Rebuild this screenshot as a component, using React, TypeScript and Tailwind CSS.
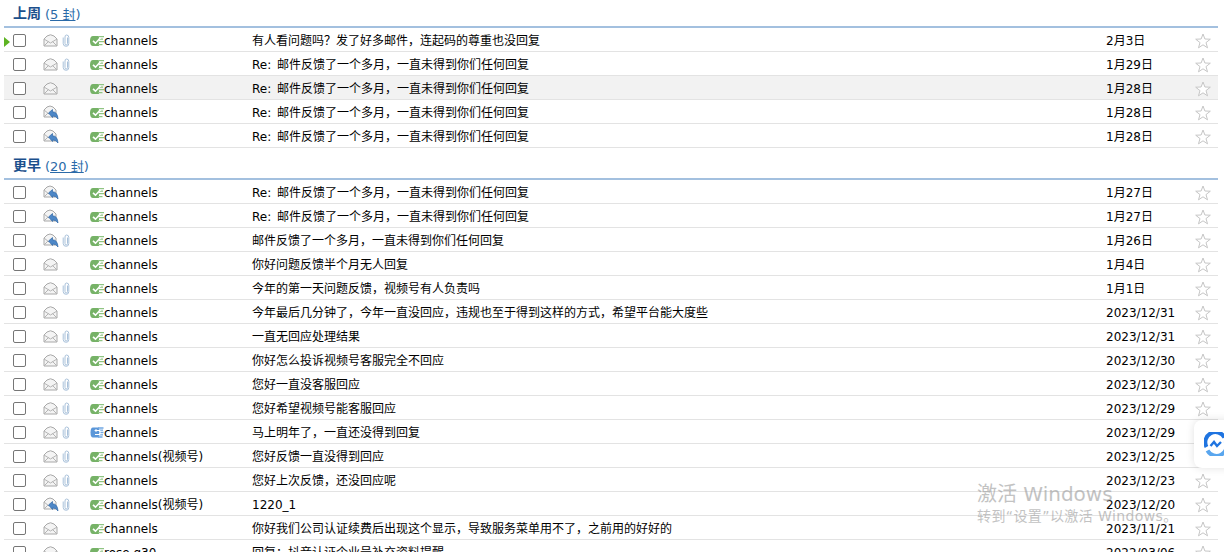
const font = { fontFamily: '"DejaVu Sans","Noto Sans CJK SC",sans-serif' };

type R = [number, number, string, string, string, number?, number?];
const week: R[] = [
  [0, 1, "channels", "有人看问题吗？发了好多邮件，连起码的尊重也没回复", "2月3日"],
  [0, 1, "channels", "Re: 邮件反馈了一个多月，一直未得到你们任何回复", "1月29日"],
  [0, 0, "channels", "Re: 邮件反馈了一个多月，一直未得到你们任何回复", "1月28日", 1],
  [1, 0, "channels", "Re: 邮件反馈了一个多月，一直未得到你们任何回复", "1月28日"],
  [1, 0, "channels", "Re: 邮件反馈了一个多月，一直未得到你们任何回复", "1月28日"],
];
const older: R[] = [
  [1, 0, "channels", "Re: 邮件反馈了一个多月，一直未得到你们任何回复", "1月27日"],
  [1, 0, "channels", "Re: 邮件反馈了一个多月，一直未得到你们任何回复", "1月27日"],
  [1, 1, "channels", "邮件反馈了一个多月，一直未得到你们任何回复", "1月26日"],
  [0, 0, "channels", "你好问题反馈半个月无人回复", "1月4日"],
  [0, 1, "channels", "今年的第一天问题反馈，视频号有人负责吗", "1月1日"],
  [0, 0, "channels", "今年最后几分钟了，今年一直没回应，违规也至于得到这样的方式，希望平台能大度些", "2023/12/31"],
  [0, 1, "channels", "一直无回应处理结果", "2023/12/31"],
  [0, 1, "channels", "你好怎么投诉视频号客服完全不回应", "2023/12/30"],
  [0, 1, "channels", "您好一直没客服回应", "2023/12/30"],
  [0, 1, "channels", "您好希望视频号能客服回应", "2023/12/29"],
  [0, 1, "channels", "马上明年了，一直还没得到回复", "2023/12/29", 0, 1],
  [0, 1, "channels(视频号)", "您好反馈一直没得到回应", "2023/12/25"],
  [0, 1, "channels", "您好上次反馈，还没回应呢", "2023/12/23"],
  [1, 1, "channels(视频号)", "1220_1", "2023/12/20"],
  [0, 0, "channels", "你好我们公司认证续费后出现这个显示，导致服务菜单用不了，之前用的好好的", "2023/11/21"],
  [0, 0, "rose.g30", "回复：抖音认证企业号补充资料提醒", "2022/03/06"],
];

function Envelope() {
  return (
    <svg width="15" height="13" viewBox="0 0 15 13" className="block">
      <path d="M1 5 L4 2 Q7.5 -0.5 11 2 L14 5 V12 H1 Z" fill="#f4f4f4" stroke="#a8a8a8" />
      <path d="M1 5 L7.5 9 L14 5 M1 12 L5.5 7.5 M14 12 L9.5 7.5" fill="none" stroke="#b4b4b4" />
    </svg>
  );
}
function Reply() {
  return (
    <svg width="16" height="15" viewBox="0 0 16 15" className="block">
      <path d="M1 5 L4 2 Q7 0 10 2 L13 5 V12 H1 Z" fill="#f4f4f4" stroke="#a8a8a8" />
      <path d="M1 5 L6 9 M1 12 L5 8" fill="none" stroke="#b4b4b4" />
      <path d="M5.5 8 L9.5 4.5 V6.8 Q14.5 6.8 15 14 Q13 10.8 9.5 11 V12.5 Z" fill="#4d87c7" stroke="#2f67a6" strokeWidth="0.7" />
    </svg>
  );
}
function Clip() {
  return (
    <svg width="8" height="13" viewBox="0 0 8 13" className="block">
      <path d="M5.5 3.5 V9.5 Q5.5 11 4.2 11 Q3 11 3 9.5 V3 Q3 1 4.5 1 Q6.8 1 6.8 3.5 V9.5 Q6.8 12.3 4.2 12.3 Q1.2 12.3 1.2 9.5 V3.5" fill="none" stroke="#a9c1da" />
    </svg>
  );
}
function Tag({ blue }: { blue?: boolean }) {
  if (blue)
    return (
      <svg width="14" height="11" viewBox="0 0 14 11" className="block">
        <path d="M3 0.5 H9 V10.5 H3 Q0.5 10.5 0.5 5.5 Q0.5 0.5 3 0.5 Z" fill="#5b97d9" />
        <path d="M8 1 H13.5 M9 3.2 H13 M9 5.5 H13.5 M9 7.8 H13 M8 10 H12.5" stroke="#6fa6e2" strokeWidth="1.3" />
        <path d="M10 3.5 H5 L6.5 2 M5 3.5 L6.5 5 M10 3.5 V7.5 H5" fill="none" stroke="#fff" />
      </svg>
    );
  return (
    <svg width="14" height="10" viewBox="0 0 14 10" className="block">
      <path d="M3 0 H9 V10 H3 Q0 10 0 5 Q0 0 3 0 Z" fill="#76b267" />
      <path d="M8 0.7 H14 M8 3.2 H13 M8 5.7 H14 M8 8.7 H12.5" stroke="#8fc482" strokeWidth="1.3" />
      <path d="M3 4.8 L5.5 7.2 L10.5 1.8" fill="none" stroke="#fff" strokeWidth="1.6" />
    </svg>
  );
}
function Star() {
  return (
    <svg width="16" height="16" viewBox="0 0 16 16" className="block">
      <path d="M8 1 L9.9 6 L15.3 6.2 L11 9.6 L12.5 14.8 L8 11.8 L3.5 14.8 L5 9.6 L0.7 6.2 L6.1 6 Z" fill="#fff" stroke="#c6c6c6" />
    </svg>
  );
}

function Row({ r, current }: { r: R; current?: boolean }) {
  const [env, clip, name, subject, date, hl, blue] = r;
  return (
    <div className={`relative flex h-6 items-center border-b border-[#e3e3e3] pt-[2px] text-[12px] text-[#000] ${hl ? "bg-[#f2f2f2]" : "bg-white"}`}>
      {current && (
        <span className="absolute left-0 top-[9px] h-0 w-0 border-y-[5px] border-l-[6px] border-y-transparent border-l-[#5db322]" />
      )}
      <span className="ml-[9px] h-[13px] w-[13px] shrink-0 rounded-[2px] border border-[#767676] bg-white" />
      <span className="ml-[17px] flex w-[47px] shrink-0 items-center gap-[3px]">
        <span className="flex w-[16px] shrink-0">{env ? <Reply /> : <Envelope />}</span>
        {clip ? <Clip /> : null}
      </span>
      <span className="flex w-[162px] shrink-0 items-center">
        <span className="w-[14px] shrink-0"><Tag blue={!!blue} /></span>
        <span className="whitespace-nowrap">{name}</span>
      </span>
      <span className="w-[854px] shrink-0 whitespace-nowrap [word-spacing:2px]">{subject}</span>
      <span className="w-[89px] shrink-0 whitespace-nowrap">{date}</span>
      <Star />
    </div>
  );
}

function Group({ title, count, rows, first }: { title: string; count: string; rows: R[]; first?: boolean }) {
  return (
    <section>
      <div className={`flex items-end border-b-2 border-[#a3c0df] pl-[9px] ${first ? "h-[28px] pb-[2px]" : "h-[32px] pb-[2px]"}`}>
        <span className="text-[14px] font-bold text-[#1b4f8c]">{title}</span>
        <span className="ml-[4px] text-[13px] text-[#2a6aa8]">(<span className="underline">{count}</span>)</span>
      </div>
      {rows.map((r, i) => (
        <Row key={i} r={r} current={first && i === 0} />
      ))}
    </section>
  );
}

export default function App() {
  return (
    <div className="relative h-[552px] w-[1224px] overflow-hidden bg-white" style={font}>
      <div className="box-content w-[1214px] pl-[4px]">
        <div className="w-[1214px]">
          <Group title="上周" count="5 封" rows={week} first />
          <Group title="更早" count="20 封" rows={older} />
        </div>
      </div>
      <div className="absolute left-[1194px] top-[420px] flex h-[48px] w-[40px] items-center rounded-l-[8px] bg-white pl-[10px] shadow-[0_0_8px_rgba(0,0,0,0.12)]">
        <svg width="24" height="24" viewBox="0 0 24 24" className="shrink-0">
          <path d="M2.5 15 A10 10 0 0 1 20.5 5.5" fill="none" stroke="#1f74e0" strokeWidth="4" />
          <path d="M21.5 9 A10 10 0 0 1 3.5 18.5" fill="none" stroke="#5aa6ee" strokeWidth="4" />
          <path d="M6.5 14 L10 10 L13 14 L17 10" fill="none" stroke="#1f74e0" strokeWidth="2.4" />
        </svg>
      </div>
      <div className="pointer-events-none absolute left-[977px] top-[482px] whitespace-nowrap text-[#9b9b9b] opacity-60">
        <div className="text-[20px] leading-[24px]">激活 Windows</div>
        <div className="text-[14px] leading-[20px] tracking-[0.4px]">转到“设置”以激活 Windows。</div>
      </div>
    </div>
  );
}
